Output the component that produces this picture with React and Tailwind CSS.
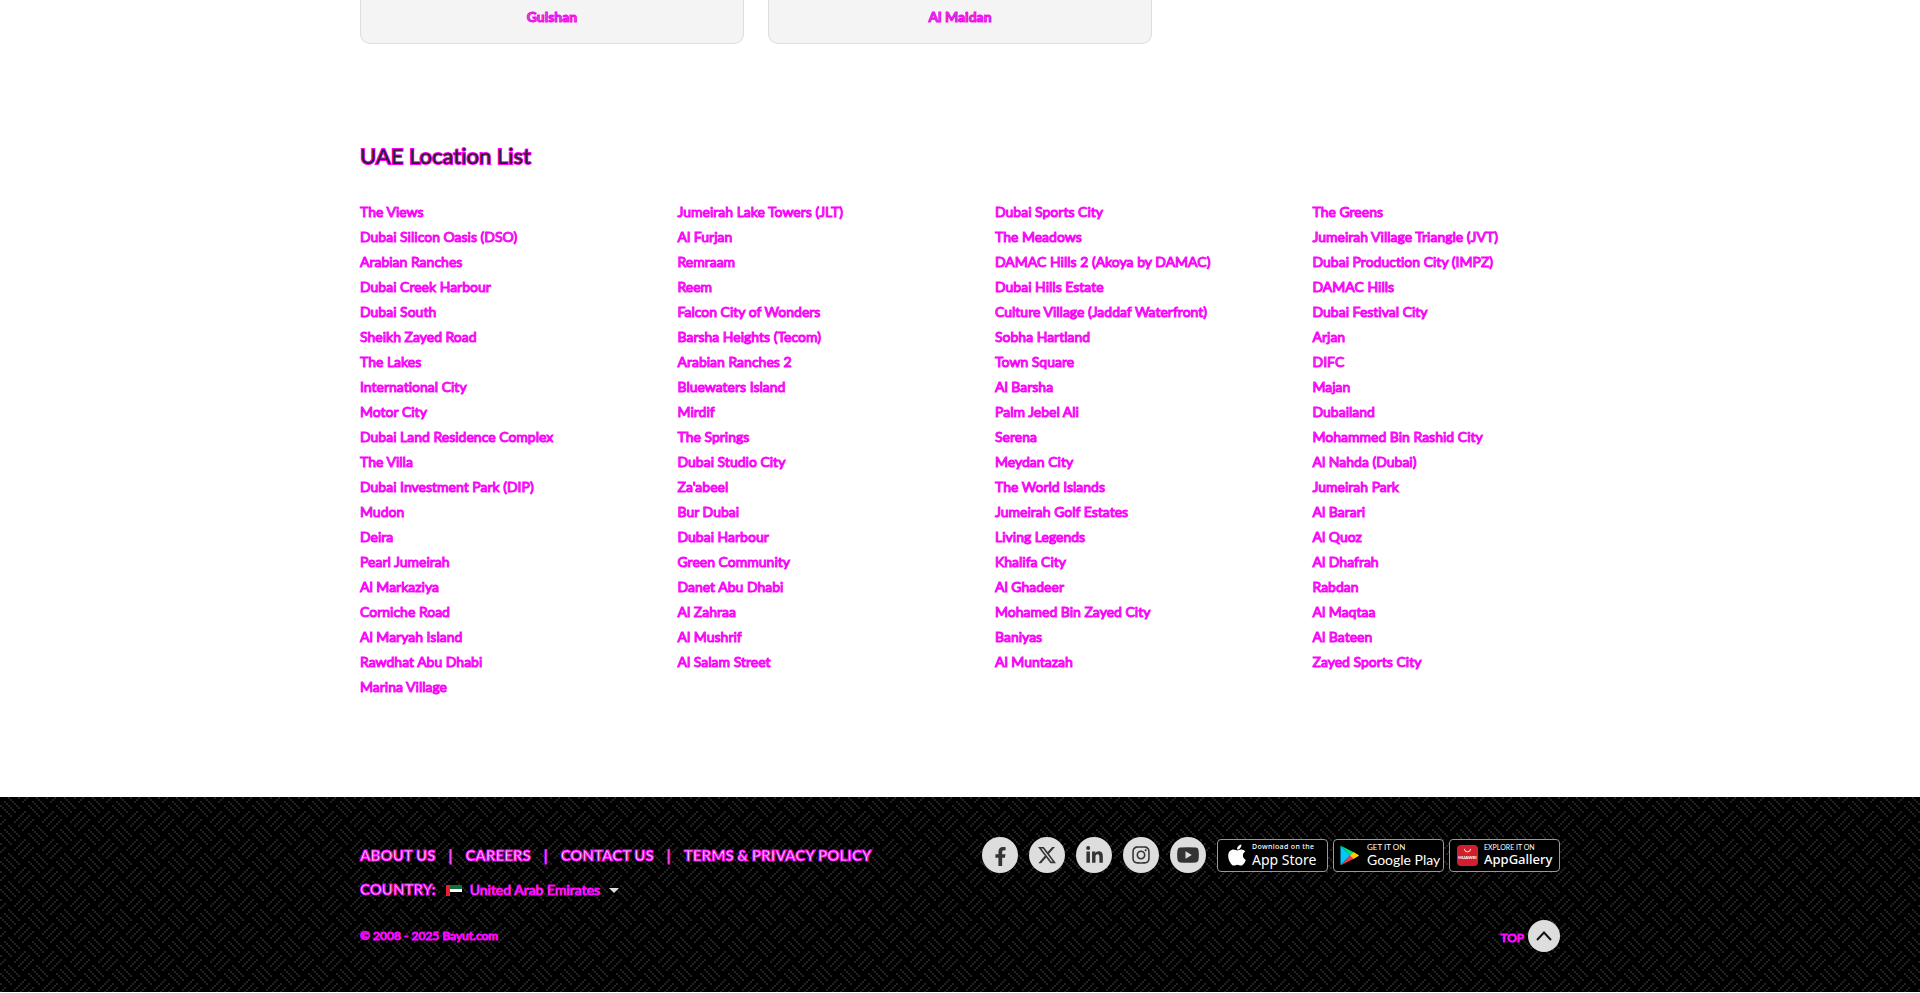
import React from "react";
import { FaFacebookF, FaLinkedinIn, FaInstagram, FaApple } from "react-icons/fa";
import { FaXTwitter } from "react-icons/fa6";

const communities = ["Gulshan", "Al Maidan"];

const locations = [
  "The Views", "Jumeirah Lake Towers (JLT)", "Dubai Sports City", "The Greens",
  "Dubai Silicon Oasis (DSO)", "Al Furjan", "The Meadows", "Jumeirah Village Triangle (JVT)",
  "Arabian Ranches", "Remraam", "DAMAC Hills 2 (Akoya by DAMAC)", "Dubai Production City (IMPZ)",
  "Dubai Creek Harbour", "Reem", "Dubai Hills Estate", "DAMAC Hills",
  "Dubai South", "Falcon City of Wonders", "Culture Village (Jaddaf Waterfront)", "Dubai Festival City",
  "Sheikh Zayed Road", "Barsha Heights (Tecom)", "Sobha Hartland", "Arjan",
  "The Lakes", "Arabian Ranches 2", "Town Square", "DIFC",
  "International City", "Bluewaters Island", "Al Barsha", "Majan",
  "Motor City", "Mirdif", "Palm Jebel Ali", "Dubailand",
  "Dubai Land Residence Complex", "The Springs", "Serena", "Mohammed Bin Rashid City",
  "The Villa", "Dubai Studio City", "Meydan City", "Al Nahda (Dubai)",
  "Dubai Investment Park (DIP)", "Za'abeel", "The World Islands", "Jumeirah Park",
  "Mudon", "Bur Dubai", "Jumeirah Golf Estates", "Al Barari",
  "Deira", "Dubai Harbour", "Living Legends", "Al Quoz",
  "Pearl Jumeirah", "Green Community", "Khalifa City", "Al Dhafrah",
  "Al Markaziya", "Danet Abu Dhabi", "Al Ghadeer", "Rabdan",
  "Corniche Road", "Al Zahraa", "Mohamed Bin Zayed City", "Al Maqtaa",
  "Al Maryah Island", "Al Mushrif", "Baniyas", "Al Bateen",
  "Rawdhat Abu Dhabi", "Al Salam Street", "Al Muntazah", "Zayed Sports City",
  "Marina Village",
];

const footerLinks = ["ABOUT US", "CAREERS", "CONTACT US", "TERMS & PRIVACY POLICY"];

const OUTLINE = "[-webkit-text-stroke:1px_#ff00ff]";

// Starting cell and horizontal direction of each dotted diagonal in the 14x14 weave.
const diagonals = [
  [4, 0, 1], [2, 2, 1], [0, 4, 1],
  [12, 7, -1], [14, 9, -1], [16, 11, -1],
];

const weaveDots = diagonals.flatMap(([x, y, dir]) =>
  [0, 1, 2, 3, 4, 5].map((i) => [(x + dir * i) % 14, (y + i) % 14])
);

function Weave() {
  return (
    <svg className="absolute inset-0 h-full w-full" aria-hidden="true" shapeRendering="crispEdges">
      <defs>
        <pattern id="weave" width="28" height="28" patternUnits="userSpaceOnUse">
          {weaveDots.map(([x, y], i) => (
            <rect key={i} x={x * 2} y={y * 2} width="2" height="2" fill="#222222" />
          ))}
        </pattern>
      </defs>
      <rect width="100%" height="100%" fill="url(#weave)" />
    </svg>
  );
}

function YoutubeIcon() {
  return (
    <svg viewBox="0 0 22 16" className="h-4 w-[22px]" fill="#333333">
      <path fillRule="evenodd" d="M3 .6Q11-.3 19 .6Q21.3.9 21.5 3.2Q22.200 8 21.500 12.800Q21.300 15.100 19 15.400Q11 16.300 3 15.400Q.7 15.100.5 12.800Q-.2 8 .5 3.200Q.7.9 3 .6ZM8.500 4.300V11.700L14.800 8Z" />
    </svg>
  );
}

const socials = [
  ["Facebook", <FaFacebookF key="f" className="mt-0.5 size-[19px]" />],
  ["X", <FaXTwitter key="x" className="size-5" />],
  ["LinkedIn", <FaLinkedinIn key="l" className="size-[19px]" />],
  ["Instagram", <FaInstagram key="i" className="size-5" />],
  ["YouTube", <YoutubeIcon key="y" />],
];

function PlayIcon() {
  return (
    <svg viewBox="0 0 19 21" className="h-[21px] w-[19px]">
      <path d="M.5.700V20.300L10 10.500Z" fill="#00c8f8" />
      <path d="M.5.500L13.700 7.200L10 10.700Z" fill="#00e07a" />
      <path d="M.5 20.500L13.700 13.800L10 10.300Z" fill="#f4364c" />
      <path d="M13.500 7L18.600 10Q19.100 10.500 18.600 11L13.500 14L10 10.500Z" fill="#ffcb00" />
    </svg>
  );
}

function HuaweiIcon() {
  return (
    <svg viewBox="0 0 21 21" className="size-[21px]">
      <rect width="21" height="21" rx="4" fill="#d0202e" />
      <path d="M7.300 3.800Q7.600 6.900 10.500 6.900Q13.400 6.900 13.700 3.800" fill="none" stroke="#fff" strokeWidth=".9" />
      <text x="10.500" y="13.500" textAnchor="middle" fontFamily="Lato, sans-serif" fontWeight="900" fontSize="4.500" fill="#fff">HUAWEI</text>
    </svg>
  );
}

const stores = [
  { top: "Download on the", name: "App Store", icon: <FaApple className="size-6" />, pad: "pl-[7px]", topFont: "font-['Noto_Sans',sans-serif] text-[7px] font-medium tracking-wider", nameFont: "font-['Noto_Sans',sans-serif] text-sm" },
  { top: "GET IT ON", name: "Google Play", icon: <PlayIcon />, pad: "pl-1.5", topFont: "font-['Lato',sans-serif] text-[8px]", nameFont: "font-['Lato',sans-serif] text-sm" },
  { top: "EXPLORE IT ON", name: "AppGallery", icon: <HuaweiIcon />, pad: "pl-[7px]", topFont: "font-['Lato',sans-serif] text-[7px]", nameFont: "font-['Noto_Sans',sans-serif] text-[13px] font-medium" },
];

function Flag() {
  return (
    <svg viewBox="0 0 16 11" className="h-[11px] w-4" shapeRendering="crispEdges" aria-hidden="true">
      <rect width="16" height="11" fill="#000" />
      <rect width="16" height="4" fill="#12723f" />
      <rect y="4" width="16" height="3" fill="#fff" />
      <rect width="4" height="11" fill="#e8202a" />
    </svg>
  );
}

export default function App() {
  return (
    <div className="bg-white font-['Lato',sans-serif] text-sm text-[#777] [font-variant-ligatures:none]">
      <main className="mx-auto max-w-[1200px] pb-[98px]">
        <section className="grid grid-cols-3 gap-6">
          {communities.map((name) => (
            <a key={name} href="#community" className={`flex h-11 justify-center rounded-b-[10px] border border-t-0 border-[#dedede] bg-[#f4f4f4] pt-[7px] leading-5 font-bold ${OUTLINE}`}>
              {name}
            </a>
          ))}
        </section>
        <section className="pt-24">
          <h2 className="text-[22px] leading-8 text-[#222] [-webkit-text-stroke:2px_#ff00ff] [paint-order:stroke]">UAE Location List</h2>
          <ul className="mt-[27px] grid grid-cols-4 gap-x-[70px]">
            {locations.map((name) => (
              <li key={name} className="h-[25px] leading-[25px] whitespace-nowrap">
                <a href="#location" className={OUTLINE}>{name}</a>
              </li>
            ))}
          </ul>
        </section>
      </main>

      <footer className="relative bg-black pt-10 pb-10 text-[#ddd]">
        <Weave />
        <div className="relative mx-auto max-w-[1200px]">
          <div className="flex items-start justify-between">
            <div>
              <nav className={`flex h-9 items-center pt-0.5 text-[15px] font-black ${OUTLINE}`}>
                {footerLinks.map((label, i) => (
                  <React.Fragment key={label}>
                    {i > 0 && <span className="px-[13px] font-bold">|</span>}
                    <a href="#footer">{label}</a>
                  </React.Fragment>
                ))}
              </nav>
              <div className={`mt-[5px] flex h-6 items-center ${OUTLINE}`}>
                <label htmlFor="country" className="mr-2.5 text-[15px] font-bold">COUNTRY:</label>
                <Flag />
                <select id="country" className={`ml-2 appearance-none bg-transparent pr-2 ${OUTLINE}`}>
                  <option>United Arab Emirates</option>
                </select>
                <svg viewBox="0 0 10 5" className="h-[5px] w-2.5" aria-hidden="true">
                  <path d="M0 0H10L5 5Z" fill="#ddd" />
                </svg>
              </div>
            </div>
            <div className="flex h-9 items-center">
              <div className="flex gap-[11px]">
                {socials.map(([label, icon]) => (
                  <a key={label} href="#social" aria-label={label} className="flex size-9 items-center justify-center rounded-full bg-[#ddd] text-[#333]">
                    {icon}
                  </a>
                ))}
              </div>
              <div className="ml-[11px] flex gap-[5px]">
                {stores.map(({ top, name, icon, pad, topFont, nameFont }) => (
                  <a key={name} href="#store" className={`flex h-[33px] w-[111px] items-center rounded-sm border border-[#999] bg-black text-white ${pad}`}>
                    <span className="flex w-[27px] shrink-0">{icon}</span>
                    <span className="flex flex-col whitespace-nowrap">
                      <span className={`leading-2 ${topFont}`}>{top}</span>
                      <span className={`leading-[17px] ${nameFont}`}>{name}</span>
                    </span>
                  </a>
                ))}
              </div>
            </div>
          </div>
          <div className="mt-[18px] flex h-8 items-center justify-between">
            <p className={`text-xs ${OUTLINE}`}>© 2008 - 2025 Bayut.com</p>
            <button type="button" className={`flex items-center gap-1 text-xs ${OUTLINE}`}>
              <span className="pt-1">TOP</span>
              <span className="flex size-8 items-center justify-center rounded-full bg-[#ddd]">
                <svg viewBox="0 0 16 10" className="h-2.5 w-4" fill="none" stroke="#111" strokeWidth="2" aria-hidden="true">
                  <path d="M1 9L8 1.500L15 9" />
                </svg>
              </span>
            </button>
          </div>
        </div>
      </footer>
    </div>
  );
}
